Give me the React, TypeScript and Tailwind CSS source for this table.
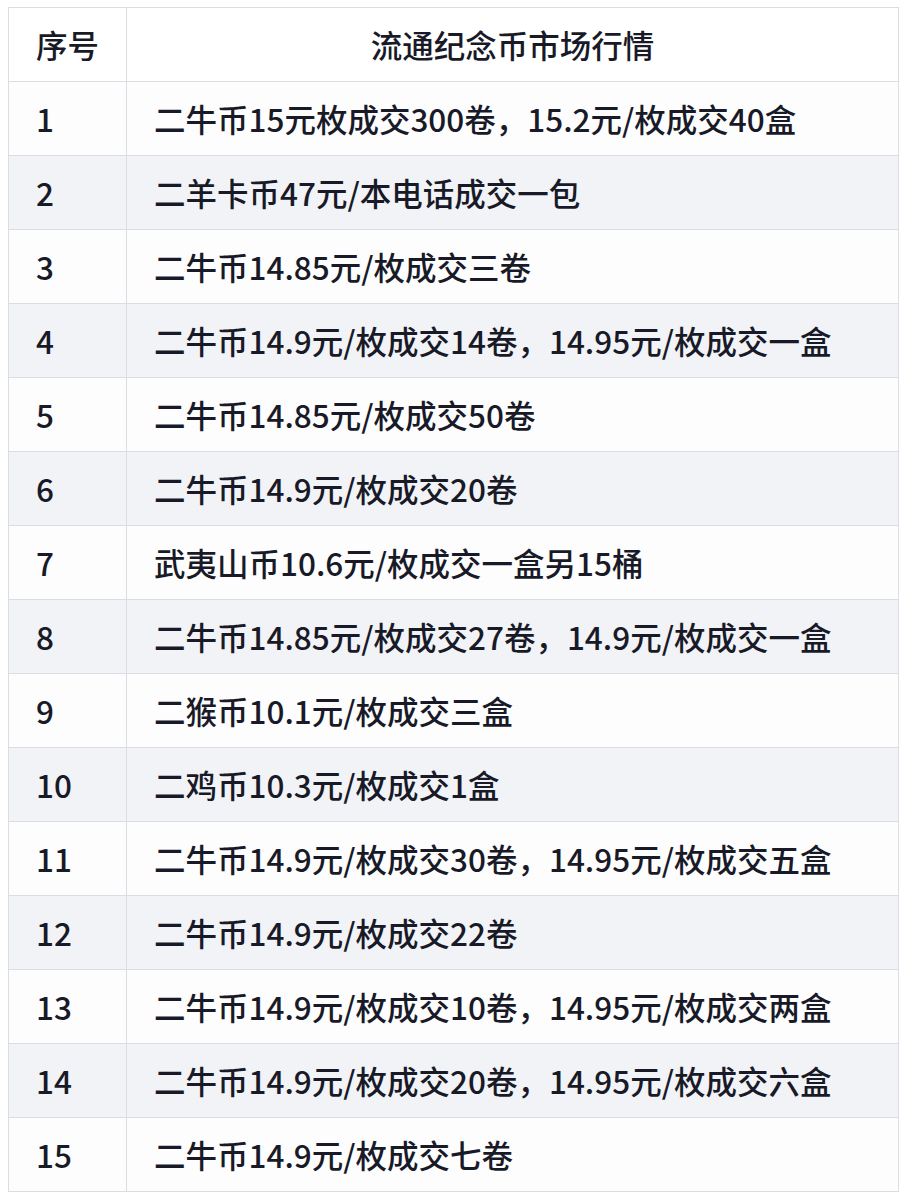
const rows = [
  "二牛币15元枚成交300卷，15.2元/枚成交40盒",
  "二羊卡币47元/本电话成交一包",
  "二牛币14.85元/枚成交三卷",
  "二牛币14.9元/枚成交14卷，14.95元/枚成交一盒",
  "二牛币14.85元/枚成交50卷",
  "二牛币14.9元/枚成交20卷",
  "武夷山币10.6元/枚成交一盒另15桶",
  "二牛币14.85元/枚成交27卷，14.9元/枚成交一盒",
  "二猴币10.1元/枚成交三盒",
  "二鸡币10.3元/枚成交1盒",
  "二牛币14.9元/枚成交30卷，14.95元/枚成交五盒",
  "二牛币14.9元/枚成交22卷",
  "二牛币14.9元/枚成交10卷，14.95元/枚成交两盒",
  "二牛币14.9元/枚成交20卷，14.95元/枚成交六盒",
  "二牛币14.9元/枚成交七卷",
];

export default function App() {
  return (
    <div
      className="w-[904px] h-[1192px] bg-white pt-[7px] pl-[8px] text-[#191a28]"
      style={{ fontFamily: '"Noto Sans CJK SC", "Noto Sans", sans-serif' }}
    >
      <table className="w-[891px] border-collapse text-[31.5px] leading-none font-medium">
        <thead>
          <tr className="h-[74px] bg-white">
            <th className="w-[118px] border border-[#dadde3] pl-[27px] text-left font-medium">
              序号
            </th>
            <th className="border border-[#dadde3] text-center font-medium">
              流通纪念币市场行情
            </th>
          </tr>
        </thead>
        <tbody>
          {rows.map((text, i) => (
            <tr
              key={i}
              className={
                "h-[74px] " + (i % 2 === 1 ? "bg-[#f2f3f7]" : "bg-[#fdfdfe]")
              }
            >
              <td className="border border-[#dadde3] pl-[27px]">{i + 1}</td>
              <td className="border border-[#dadde3] pl-[27px]">{text}</td>
            </tr>
          ))}
        </tbody>
      </table>
    </div>
  );
}
